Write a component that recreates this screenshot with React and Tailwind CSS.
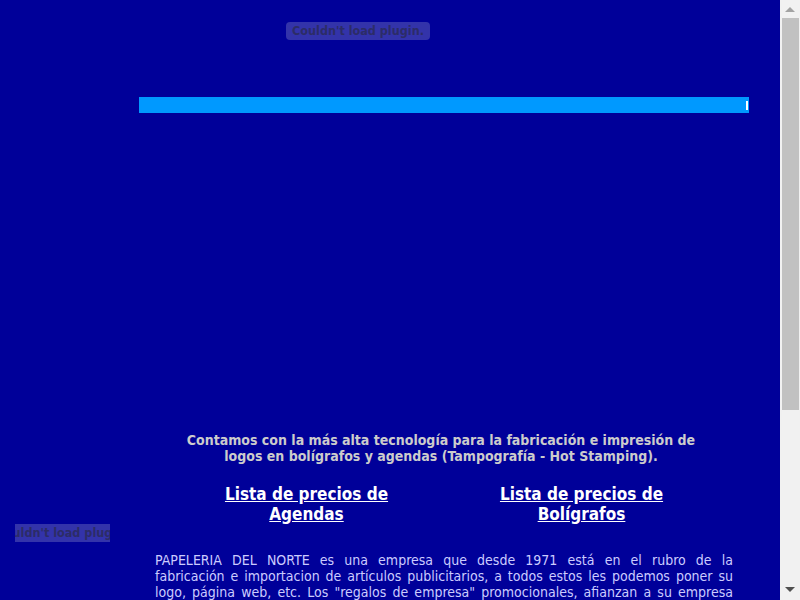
import React from 'react';

const font = { fontFamily: '"DejaVu Sans Condensed", "DejaVu Sans", sans-serif' };

const bodyLines = [
  'PAPELERIA DEL NORTE es una empresa que desde 1971 está en el rubro de la',
  'fabricación e importacion de artículos publicitarios, a todos estos les podemos poner su',
  'logo, página web, etc. Los "regalos de empresa" promocionales, afianzan a su empresa',
  'en la mente de sus clientes y proveedores, generando una imagen positiva y duradera.',
];

// placeholder Chrome draws for an embed it cannot load
const PluginBox = ({ className = '' }) => (
  <div
    className={`flex items-center justify-center overflow-hidden whitespace-nowrap bg-[#3333aa] text-[#2c2c66] text-[12.5px] font-bold leading-none ${className}`}
  >
    Couldn't load plugin.
  </div>
);

const Scrollbar = () => (
  <div className="w-[20px] h-[600px] shrink-0 bg-[#f1f1f1] flex flex-col items-center">
    <svg width="10" height="6" viewBox="0 0 10 6" className="mt-[7px]">
      <path d="M5 0 L10 5 L0 5 Z" fill="#a3a3a3" />
    </svg>
    <div className="mt-[5px] w-[17px] h-[392px] bg-[#c1c1c1]" />
    <div className="flex-1" />
    <svg width="10" height="6" viewBox="0 0 10 6" className="mb-[7px]">
      <path d="M0 0 L10 0 L5 5 Z" fill="#505050" />
    </svg>
  </div>
);

export default function App() {
  return (
    <div className="h-[600px] flex overflow-hidden" style={font}>
      <div className="w-[780px] shrink-0 bg-[#000099] flex items-start overflow-hidden">
        {/* left column */}
        <div className="w-[139px] shrink-0 pt-[524px] pl-[15px]">
          <PluginBox className="w-[95px] h-[18px]" />
        </div>

        {/* main column */}
        <div className="w-[610px] shrink-0">
          <div className="pt-[22px] pl-[147px]">
            <PluginBox className="w-[144px] h-[18px] rounded-[4px]" />
          </div>

          <div className="mt-[57px] h-[16px] bg-[#0099ff] flex items-center justify-end pr-[1px]">
            <div className="w-[2px] h-[9px] bg-white" />
          </div>

          <p className="mt-[319px] pr-[6px] text-center text-[14px] font-bold leading-[16px] text-[#cccccc]">
            Contamos con la más alta tecnología para la fabricación e impresión de
            <br />
            logos en bolígrafos y agendas (Tampografía - Hot Stamping).
          </p>

          <div className="mx-auto mt-[20px] w-[550px] grid grid-cols-2 text-center text-[17px] font-bold leading-[20px] text-white">
            <a href="#" className="underline">
              Lista de precios de
              <br />
              Agendas
            </a>
            <a href="#" className="underline">
              Lista de precios de
              <br />
              Bolígrafos
            </a>
          </div>

          <div className="mt-[28px] px-[16px] text-[14px] leading-[16px] text-[#ccccff]">
            {bodyLines.map((line, i) => (
              <div
                key={i}
                className={i < bodyLines.length - 1 ? 'text-justify [text-align-last:justify]' : ''}
              >
                {line}
              </div>
            ))}
          </div>
        </div>
      </div>
      <Scrollbar />
    </div>
  );
}
